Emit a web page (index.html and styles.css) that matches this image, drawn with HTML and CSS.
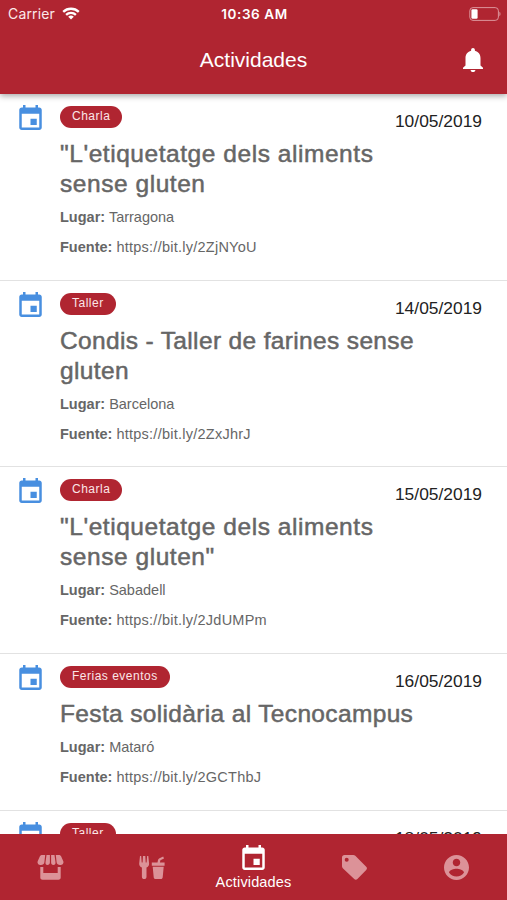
FILE: index.html
```html
<!DOCTYPE html>
<html lang="es">
<head>
    <meta charset="UTF-8">
    <meta name="viewport" content="width=device-width, initial-scale=1.0">
    <title>Actividades</title>
    <link rel="stylesheet" href="styles.css">
</head>
<body>
<svg class="sprite">
    <symbol id="event" viewBox="3 1 18 20"><path d="M17 12h-5v5h5v-5zM16 1v2H8V1H6v2H5c-1.11 0-1.99.9-1.99 2L3 19c0 1.1.89 2 2 2h14c1.1 0 2-.9 2-2V5c0-1.1-.9-2-2-2h-1V1h-2zm3 18H5V8h14v11z"/></symbol>
</svg>
<div class="app">
    <header class="header">
        <div class="status-bar">
            <div class="carrier">
                <span>Carrier</span>
                <svg class="wifi" viewBox="0 0 18 13">
                    <path d="M1.2 4.9a11.2 11.2 0 0 1 15.6 0M4.1 7.9a7 7 0 0 1 9.8 0" fill="none" stroke="#fff" stroke-width="2.3"/>
                    <path d="M9 12.6L6.2 9.8a4 4 0 0 1 5.6 0z" fill="#fff"/>
                </svg>
            </div>
            <div class="clock">10:36 AM</div>
            <div class="battery">
                <svg viewBox="0 0 32 14" width="32" height="14">
                    <rect x=".8" y=".6" width="28.6" height="12.8" rx="3.2" fill="none" stroke="#dc949b"/>
                    <rect x="2.4" y="2.2" width="6.2" height="9.6" rx="1.2" fill="#fff"/>
                    <path d="M30.4 4.8c1.5.6 1.5 3.8 0 4.4z" fill="#dc949b"/>
                </svg>
            </div>
        </div>
        <div class="toolbar">
            <h1 class="title">Actividades</h1>
            <svg class="bell" viewBox="0 0 20 24">
                <path d="M10 24c1.4 0 2.4-.9 2.4-2.1H7.6C7.6 23.1 8.6 24 10 24zM17.5 17.5V10.2c0-3.900-2.300-6.600-5.600-7.400V1.900C11.900.8 11.100 0 10 0S8.100.8 8.100 1.900v.9c-3.300.8-5.600 3.500-5.600 7.400v7.300L0 19.700V21h20v-1.300z"/>
            </svg>
        </div>
    </header>

    <main class="list">
        <article class="item">
            <svg class="item-icon"><use href="#event"/></svg>
            <div class="item-body">
                <div class="item-top"><span class="tag">Charla</span><span class="date">10/05/2019</span></div>
                <h2 class="quoted">"L'etiquetatge dels aliments sense gluten</h2>
                <p><b>Lugar:</b> Tarragona</p>
                <p><b>Fuente:</b> <span class="link">https://bit.ly/2ZjNYoU</span></p>
            </div>
        </article>
        <article class="item">
            <svg class="item-icon"><use href="#event"/></svg>
            <div class="item-body">
                <div class="item-top"><span class="tag">Taller</span><span class="date">14/05/2019</span></div>
                <h2>Condis - Taller de farines sense gluten</h2>
                <p><b>Lugar:</b> Barcelona</p>
                <p><b>Fuente:</b> <span class="link">https://bit.ly/2ZxJhrJ</span></p>
            </div>
        </article>
        <article class="item">
            <svg class="item-icon"><use href="#event"/></svg>
            <div class="item-body">
                <div class="item-top"><span class="tag">Charla</span><span class="date">15/05/2019</span></div>
                <h2 class="quoted">"L'etiquetatge dels aliments sense gluten"</h2>
                <p><b>Lugar:</b> Sabadell</p>
                <p><b>Fuente:</b> <span class="link">https://bit.ly/2JdUMPm</span></p>
            </div>
        </article>
        <article class="item">
            <svg class="item-icon"><use href="#event"/></svg>
            <div class="item-body">
                <div class="item-top"><span class="tag">Ferias eventos</span><span class="date">16/05/2019</span></div>
                <h2>Festa solidària al Tecnocampus</h2>
                <p><b>Lugar:</b> Mataró</p>
                <p><b>Fuente:</b> <span class="link">https://bit.ly/2GCThbJ</span></p>
            </div>
        </article>
        <article class="item">
            <svg class="item-icon"><use href="#event"/></svg>
            <div class="item-body">
                <div class="item-top"><span class="tag">Taller</span><span class="date">18/05/2019</span></div>
            </div>
        </article>
    </main>

    <nav class="tabs">
        <a class="tab">
            <svg width="27" height="25" viewBox="0 0 27 25">
                <path d="M5.200 0h3L7.400 7.200C7.200 9 5.800 10 4 10 1.500 10 0 8.300.7 6.200L2.800 1.500C3.300.5 4 0 5.200 0zM9.500 0h3.400v7.200c0 1.700-1 2.800-2.500 2.800S8.300 8.900 8.500 7.200zM14.100 0h3.400l1 7.200c.2 1.700-.6 2.800-2.100 2.800s-2.300-1.100-2.300-2.800zM18.800 0h3c1.200 0 1.900.5 2.400 1.500l2.100 4.700C27 8.300 25.500 10 23 10c-1.800 0-3.200-1-3.400-2.800z"/>
                <path d="M3.300 12h3v6h14.400v-6h3v10.500c0 1.400-.8 2.200-2.200 2.200h-16c-1.400 0-2.200-.8-2.200-2.200z"/>
            </svg>
        </a>
        <a class="tab">
            <svg width="26" height="23" viewBox="0 0 26 23">
                <path d="M1 0h1.200l.5 6.500h.9L4 0h2.300l.4 6.500h.9L8.100 0h1.200l.8 7.500c.1 2.100-1 3.400-2.600 4v9.200c0 1.400-.9 2.300-2.300 2.300s-2.300-.9-2.300-2.300v-9.200C1.200 10.900.1 9.600.2 7.500z"/>
                <path d="M12.800 6.500h5.700L19 4c.2-.9.7-1.400 1.500-1.700L24.200.6l.8 1.900-3.600 1.700-.5 2.300h4.700v3.200H12.800zM13.700 10.800h11l-1 10.400c-.1 1.100-.8 1.800-1.900 1.800h-5.200c-1.100 0-1.800-.7-1.900-1.800z"/>
            </svg>
        </a>
        <a class="tab active">
            <svg width="23" height="25"><use href="#event"/></svg>
            <span>Actividades</span>
        </a>
        <a class="tab">
            <svg width="25" height="25" viewBox="0 0 25 25">
                <path d="M2.500 0h8.800c.8 0 1.400.3 2 .8l10.900 10.900c1 1 1 2.200 0 3.200l-8.800 9c-1 1-2.200 1-3.200 0L.8 13.200c-.5-.6-.8-1.200-.8-2V2.500C0 1 1 0 2.500 0zM4.700 2.700a2 2 0 1 0 0 4 2 2 0 0 0 0-4z"/>
            </svg>
        </a>
        <a class="tab">
            <svg width="25" height="25" viewBox="2 2 20 20">
                <path d="M12 2C6.480 2 2 6.480 2 12s4.480 10 10 10 10-4.480 10-10S17.520 2 12 2zm0 3c1.660 0 3 1.340 3 3s-1.340 3-3 3-3-1.340-3-3 1.340-3 3-3zm0 14.200c-2.500 0-4.710-1.280-6-3.220.03-1.990 4-3.080 6-3.080 1.990 0 5.970 1.090 6 3.080-1.290 1.940-3.500 3.220-6 3.220z"/>
            </svg>
        </a>
    </nav>
</div>
</body>
</html>
```
FILE: styles.css
```css
* {
    box-sizing: border-box;
}
body {
    margin: 0;
    background-color: #fff;
    font-family: "Liberation Sans", Arial, sans-serif;
}
.sprite {
    display: none;
}
.app {
    display: flex;
    flex-direction: column;
    height: 900px;
    overflow: hidden;
}

/* Header */
.header {
    flex: none;
    height: 94px;
    background-color: #b02531;
    color: #fff;
    box-shadow: 0 2px 6px rgba(0, 0, 0, 0.35);
    z-index: 1;
}
.status-bar {
    display: grid;
    grid-template-columns: 1fr auto 1fr;
    align-items: center;
    height: 27px;
    padding: 0 6px 0 8px;
    font-family: Inter, "Liberation Sans", sans-serif;
    font-size: 14px;
}
.carrier {
    display: flex;
    align-items: center;
    gap: 7px;
    color: #fbe9ea;
    letter-spacing: 0.15px;
}
.wifi {
    width: 18px;
    height: 13px;
    margin-top: -1px;
}
.clock {
    font-weight: 600;
    font-size: 13.5px;
    letter-spacing: 0.6px;
}
.battery {
    display: flex;
    justify-content: flex-end;
}
.toolbar {
    display: grid;
    grid-template-columns: 1fr auto 1fr;
    align-items: center;
    height: 65px;
    padding: 0 24px;
}
.title {
    grid-column: 2;
    margin: 0;
    font-size: 21px;
    font-weight: normal;
}
.bell {
    justify-self: end;
    width: 20px;
    height: 24px;
    fill: #fff;
}

/* Activities */
.list {
    flex: 1;
    min-height: 0;
    overflow: hidden;
}
.item {
    display: flex;
    gap: 18px;
    padding: 11px 25px 17.7px 19px;
    border-bottom: 1px solid #e2e2e2;
}
.item-icon {
    flex: none;
    width: 23px;
    height: 25px;
    fill: #488fe0;
}
.item-body {
    flex: 1;
    color: #666;
}
.item-top {
    display: flex;
    justify-content: space-between;
    height: 34px;
    padding-top: 1px;
}
.tag {
    height: 22px;
    padding: 0 12px;
    border-radius: 11px;
    background-color: #b02531;
    color: #fbe6e8;
    font-size: 12px;
    line-height: 21px;
    letter-spacing: 0.5px;
}
.date {
    padding-top: 5px;
    color: #222;
    font-size: 17.4px;
    line-height: 20px;
}
.item h2 {
    max-width: 370px;
    margin: 0 0 3px;
    font-size: 24.5px;
    font-weight: normal;
    line-height: 30px;
    letter-spacing: 0.35px;
    -webkit-text-stroke: 0.5px #666;
}
.item h2.quoted {
    letter-spacing: 0.55px;
}
.item p {
    margin: 0;
    font-size: 14.5px;
    line-height: 30px;
}
.link {
    letter-spacing: 0.25px;
}

/* Tabs */
.tabs {
    flex: none;
    display: flex;
    height: 66px;
    background-color: #b02531;
    z-index: 1;
}
.tab {
    flex: 1;
    display: flex;
    flex-direction: column;
    align-items: center;
    justify-content: center;
    color: #fff;
    font-size: 14.5px;
}
.tab svg {
    fill: #dc9298;
}
.tab.active {
    gap: 4px;
    letter-spacing: 0.15px;
}
.tab.active svg {
    fill: #fff;
}
```
